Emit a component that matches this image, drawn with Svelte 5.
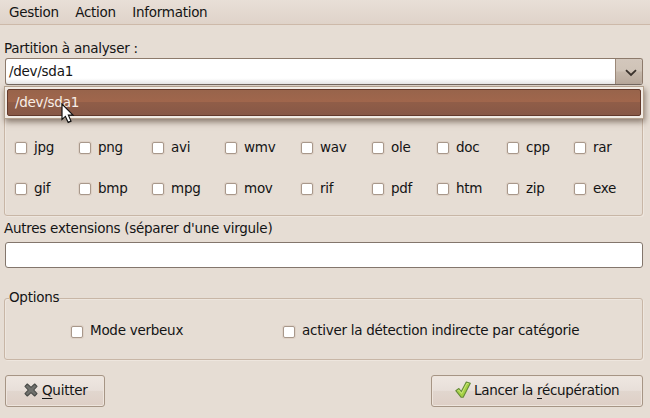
<script>
  const menus = ['Gestion', 'Action', 'Information'];
  const rows = [
    ['jpg', 'png', 'avi', 'wmv', 'wav', 'ole', 'doc', 'cpp', 'rar'],
    ['gif', 'bmp', 'mpg', 'mov', 'rif', 'pdf', 'htm', 'zip', 'exe']
  ];
  let partition = $state('/dev/sda1');
</script>

<div class="window">
  <nav class="menubar">
    {#each menus as menu}<span>{menu}</span>{/each}
  </nav>

  <main>
    <div class="label">Partition à analyser :</div>
    <div class="combo">
      <div class="entry">{partition}</div>
      <div class="arrow">
        <svg width="12" height="8" viewBox="0 0 12 8"><path d="M1 1.2 L6 6 L11 1.2" fill="none" stroke="#3a322c" stroke-width="1.8" /></svg>
      </div>
      <div class="popup"><div class="choice">{partition}</div></div>
    </div>

    <section class="frame formats">
      {#each rows as row}
        {#each row as ext}
          <label><i class="box"></i><span>{ext}</span></label>
        {/each}
      {/each}
    </section>

    <div class="label others">Autres extensions (séparer d'une virgule)</div>
    <div class="textfield"></div>

    <section class="frame options">
      <div class="legend">Options</div>
      <div class="checks">
        <label><i class="box"></i><span>Mode verbeux</span></label>
        <label><i class="box"></i><span>activer la détection indirecte par catégorie</span></label>
      </div>
    </section>

    <footer>
      <div class="button quit">
        <svg width="14" height="14" viewBox="0 0 14 14">
          <path d="M3.3 1 L7 4.4 L10.7 1 L13 3.3 L9.7 7 L13 10.7 L10.7 13 L7 9.6 L3.3 13 L1 10.7 L4.3 7 L1 3.3 Z" fill="#70716d" stroke="#484a47" stroke-width="1.1" stroke-linejoin="round" />
        </svg>
        <span><u>Q</u>uitter</span>
      </div>
      <div class="button launch">
        <svg width="16" height="18" viewBox="0 0 16 18">
          <path d="M.8 9.7 L3.9 7.5 L6.3 10.5 L11.3 1 L15.3 2.3 L8.2 16.3 L6.2 16.3 Z" fill="#a5d044" stroke="#648b38" stroke-width="1.1" stroke-linejoin="round" />
          <path d="M2.5 9.8 L3.7 9 L6.6 12.5 L12 2.3 L13.6 2.9" fill="none" stroke="#d0ea83" stroke-width=".9" />
        </svg>
        <span>Lancer la <u>r</u>écupération</span>
      </div>
    </footer>
  </main>

  <svg class="pointer" width="14" height="22" viewBox="0 0 14 22">
    <path d="M1 1 V16.4 L4.4 13.4 L7.2 19.4 L10 18.1 L7.4 12.2 H12 Z" fill="#fff" stroke="#111" stroke-width="1.2" />
  </svg>
</div>

<style>
  :global(body) { margin: 0; background: #e6ddd4; }
  .window {
    position: relative;
    box-sizing: border-box;
    width: 650px;
    height: 418px;
    overflow: hidden;
    background: #e6ddd4;
    color: #141414;
    font: 13.5px/16px "DejaVu Sans", sans-serif;
    letter-spacing: -.27px;
    white-space: nowrap;
  }
  .menubar {
    box-sizing: border-box;
    display: flex;
    gap: 16.4px;
    height: 25px;
    padding: 4px 9px 0;
    border-bottom: 1px solid #cdb9a9;
    background: linear-gradient(#e8dfd7, #dfd3c9);
  }
  main { padding: 15px 7px 0 4px; }
  .label { height: 16px; }
  .combo {
    position: relative;
    display: flex;
    box-sizing: border-box;
    height: 27px;
    margin: 2px 0 0 1px;
    border: 1px solid #8d7a6b;
    border-bottom-color: #756a61;
    border-radius: 3px;
    background: linear-gradient(#fff 76%, #e9e9e9);
  }
  .entry { flex: 1; padding: 4px 3px; }
  .arrow {
    display: flex;
    align-items: center;
    justify-content: center;
    box-sizing: border-box;
    width: 27px;
    padding: 2px 0 0 3px;
    border-left: 1px solid #9b8878;
    border-radius: 0 2px 2px 0;
    background: linear-gradient(#d3c7bc, #cfc3b7 48%, #c5b7aa 52%, #b8a99c);
  }
  .popup {
    position: absolute;
    z-index: 2;
    top: 27px;
    left: -2px;
    box-sizing: border-box;
    width: 640px;
    height: 33px;
    padding: 2px;
    border: 1px solid #b3a18e;
    background: #f1ebe4;
    box-shadow: 1px 3px 6px rgba(60, 40, 25, .55);
  }
  .choice {
    box-sizing: border-box;
    height: 27px;
    padding: 4px 7px;
    border: 1px solid #63392b;
    border-radius: 2px;
    background: linear-gradient(#98644b, #a0664c 46%, #905d48 50%, #875846);
    color: #f8eee7;
  }
  .frame {
    box-sizing: border-box;
    border: 1px solid #c8b6a6;
    border-radius: 3px;
    box-shadow: inset 1px 1px #eee6de, 1px 1px #eee6de;
  }
  .formats {
    display: grid;
    grid-template-columns: 64px 73px 73px 76px 71px 65px 70px 67px 69px;
    grid-template-rows: 41px 41px;
    height: 121px;
    margin-top: 10px;
    padding: 31px 0 0 10px;
  }
  label { display: flex; align-items: center; }
  label span, .button span { margin-top: -2px; }
  .box {
    box-sizing: border-box;
    flex: none;
    width: 12px;
    height: 12px;
    margin: 1px 7px 0 0;
    border: 1px solid #a8988b;
    border-radius: 2px;
    background: #fff;
    box-shadow: 0 0 0 1px #ded1c6;
  }
  .others { margin-top: 4px; }
  .textfield {
    box-sizing: border-box;
    height: 26px;
    margin: 6px 0 0 1px;
    border: 1px solid #83766c;
    border-radius: 3px;
    background: #fff;
  }
  .options { height: 62px; margin-top: 30px; }
  .legend {
    width: max-content;
    height: 16px;
    margin: -10px 0 0 4px;
    background: #e6ddd4;
  }
  .checks {
    display: grid;
    grid-template-columns: 212px auto;
    padding: 19px 0 0 66px;
  }
  footer {
    display: flex;
    justify-content: space-between;
    margin: 15px 0 0 1px;
  }
  .button {
    box-sizing: border-box;
    display: flex;
    align-items: center;
    height: 32px;
    border: 1px solid #a69585;
    border-radius: 3px;
    background: linear-gradient(#eee7e1, #e8dfd9 48%, #e1d6ce 50%, #decfc6);
    box-shadow: inset 0 0 0 1px #eee5dd;
  }
  .quit { width: 100px; padding-left: 18px; gap: 4px; }
  .launch { width: 212px; padding-left: 23px; gap: 3px; }
  .launch span { letter-spacing: -.32px; }
  .button svg { margin-top: -2px; }
  u { text-decoration-thickness: 1px; text-underline-offset: 3px; text-decoration-skip-ink: none; }
  .pointer { position: absolute; z-index: 3; left: 61px; top: 103px; }
</style>
